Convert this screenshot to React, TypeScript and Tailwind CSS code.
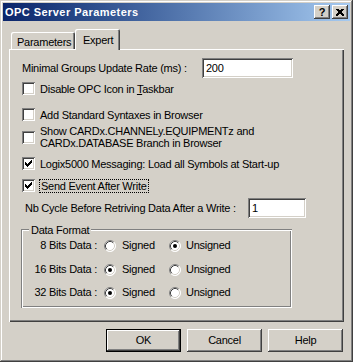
import React from "react";

const FONT = { fontFamily: '"Liberation Sans", Arial, sans-serif' };

const CHECK = [
  [0, 2], [0, 3], [0, 4],
  [1, 3], [1, 4], [1, 5],
  [2, 4], [2, 5], [2, 6],
  [3, 3], [3, 4], [3, 5],
  [4, 2], [4, 3], [4, 4],
  [5, 1], [5, 2], [5, 3],
  [6, 0], [6, 1], [6, 2],
];

function CheckBox({ checked }: { checked?: boolean }) {
  return (
    <div className="relative w-[13px] h-[13px] shrink-0 bg-white shadow-[inset_1px_1px_#808080,inset_-1px_-1px_#ffffff,inset_2px_2px_#404040,inset_-2px_-2px_#d4d0c8]">
      {checked && (
        <svg width="13" height="13" className="absolute left-0 top-0" shapeRendering="crispEdges">
          {CHECK.map(([x, y], i) => (
            <rect key={i} x={x + 3} y={y + 3} width="1" height="1" fill="#000" />
          ))}
        </svg>
      )}
    </div>
  );
}

function Radio({ checked }: { checked?: boolean }) {
  return (
    <svg width="12" height="12" className="shrink-0">
      <circle cx="6" cy="6" r="5.5" fill="#fff" />
      <path d="M2.11 9.89 A5.5 5.5 0 0 1 9.89 2.11" stroke="#808080" fill="none" />
      <path d="M9.89 2.11 A5.5 5.5 0 0 1 2.11 9.89" stroke="#ffffff" fill="none" />
      <path d="M2.82 9.18 A4.5 4.5 0 0 1 9.18 2.82" stroke="#404040" fill="none" />
      <path d="M9.18 2.82 A4.5 4.5 0 0 1 2.82 9.18" stroke="#d4d0c8" fill="none" />
      {checked && <circle cx="6" cy="6" r="2" fill="#000" />}
    </svg>
  );
}

function CheckRow({ checked, children, className }: { checked?: boolean; children: React.ReactNode; className?: string }) {
  return (
    <div className={`flex items-center ${className ?? ""}`}>
      <CheckBox checked={checked} />
      <div className="ml-[5px] leading-[12px]">{children}</div>
    </div>
  );
}

function RadioRow({ label, signed, className }: { label: string; signed: boolean; className?: string }) {
  return (
    <div className={`flex items-center h-[13px] ${className ?? ""}`}>
      <span className="w-[76px] text-right">{label}</span>
      <div className="ml-[7px] w-[65px] flex items-center">
        <Radio checked={signed} />
        <span className="ml-[6px]">Signed</span>
      </div>
      <div className="flex items-center">
        <Radio checked={!signed} />
        <span className="ml-[5px]">Unsigned</span>
      </div>
    </div>
  );
}

const raised = "shadow-[inset_-1px_-1px_#404040,inset_1px_1px_#ffffff,inset_-2px_-2px_#808080,inset_2px_2px_#d4d0c8]";
const sunken = "shadow-[inset_1px_1px_#808080,inset_-1px_-1px_#ffffff,inset_2px_2px_#404040,inset_-2px_-2px_#d4d0c8]";

function Button({ label, isDefault }: { label: string; isDefault?: boolean }) {
  if (isDefault) {
    return (
      <div className="w-[75px] h-[23px] border border-black">
        <div className={`w-full h-full flex items-center justify-center ${raised}`}>{label}</div>
      </div>
    );
  }
  return <div className={`w-[75px] h-[23px] flex items-center justify-center ${raised}`}>{label}</div>;
}

export default function App() {
  return (
    <div style={FONT} className="w-[353px] h-[362px] bg-[#d4d0c8] text-[11px] tracking-[-0.25px] text-black flex flex-col p-[3px] shadow-[inset_-1px_-1px_#404040,inset_1px_1px_#d4d0c8,inset_-2px_-2px_#808080,inset_2px_2px_#ffffff]">
      {/* title bar */}
      <div className="h-[18px] flex items-center bg-gradient-to-r from-[#0a246a] to-[#a6caf0] pl-[2px] pr-[2px]">
        <span className="text-white font-bold text-[11px] tracking-[0.45px]">OPC Server Parameters</span>
        <div className="ml-auto flex gap-[2px]">
          <div className={`w-[16px] h-[14px] bg-[#d4d0c8] flex items-center justify-center font-bold text-[11px] leading-none tracking-normal ${raised}`}>?</div>
          <div className={`w-[16px] h-[14px] bg-[#d4d0c8] flex items-center justify-center ${raised}`}>
            <svg width="8" height="7" shapeRendering="crispEdges">
              <path d="M0.5 0 L7.5 7 M1.5 0 L8 6.5 M7.5 0 L0.5 7 M6.5 0 L0 6.5" stroke="#000" strokeWidth="1" />
            </svg>
          </div>
        </div>
      </div>

      {/* tab control */}
      <div className="mt-[8px] ml-[6px] w-[335px]">
        <div className="flex items-end h-[20px] pl-[2px]">
          <div className="w-[64px] h-[17px] rounded-t-[2px] pl-[6px] pt-[2px] shadow-[inset_1px_1px_#ffffff,inset_-1px_0_#404040,inset_-2px_0_#808080]">
            Parameters
          </div>
          <div className="relative z-10 w-[45px] h-[21px] -mb-[1px] rounded-t-[2px] bg-[#d4d0c8] pl-[8px] pt-[3px] shadow-[inset_1px_1px_#ffffff,inset_-1px_0_#404040,inset_-2px_0_#808080]">
            Expert
          </div>
        </div>
        <div className="h-[273px] pl-[13px] shadow-[inset_1px_1px_#ffffff,inset_-1px_-1px_#404040,inset_-2px_-2px_#808080]">
          <div className="pt-[9px] flex items-center h-[29px]">
            <span className="w-[180px]">Minimal Groups Update Rate (ms) :</span>
            <div className={`w-[91px] h-[20px] bg-white flex items-center pl-[4px] ${sunken}`}>200</div>
          </div>
          <CheckRow className="mt-[4px] h-[13px]">
            Disable OPC Icon in <span className="underline">T</span>askbar
          </CheckRow>
          <CheckRow className="mt-[13px] h-[13px]">Add Standard Syntaxes in Browser</CheckRow>
          <CheckRow className="mt-[4px] h-[24px]">
            Show CARDx.CHANNELy.EQUIPMENTz and
            <br />
            CARDx.DATABASE Branch in Browser
          </CheckRow>
          <CheckRow checked className="mt-[8px] h-[13px]">Logix5000 Messaging: Load all Symbols at Start-up</CheckRow>
          <div className="mt-[9px] flex items-center h-[13px]">
            <CheckBox checked />
            <span className="ml-[4px] border border-dotted border-black px-[1px] leading-[12px]">Send Event After Write</span>
          </div>
          <div className="mt-[6px] flex items-center h-[20px]">
            <span className="ml-[3px] w-[223px]">Nb Cycle Before Retriving Data After a Write :</span>
            <div className={`w-[58px] h-[20px] bg-white flex items-center pl-[4px] ${sunken}`}>1</div>
          </div>
          <div className="relative mt-[11px] -ml-[1px] w-[271px] h-[79px] pt-[10px] shadow-[inset_1px_1px_#808080,inset_2px_2px_#ffffff,inset_-1px_-1px_#ffffff,inset_-2px_-2px_#808080]">
            <span className="absolute -top-[7px] left-[8px] bg-[#d4d0c8] px-[2px]">Data Format</span>
            <RadioRow label="8 Bits Data :" signed={false} />
            <RadioRow label="16 Bits Data :" signed className="mt-[11px]" />
            <RadioRow label="32 Bits Data :" signed className="mt-[10px]" />
          </div>
        </div>
      </div>

      {/* buttons */}
      <div className="mt-[7px] flex justify-end gap-[6px] pr-[7px]">
        <Button label="OK" isDefault />
        <Button label="Cancel" />
        <Button label="Help" />
      </div>
    </div>
  );
}
